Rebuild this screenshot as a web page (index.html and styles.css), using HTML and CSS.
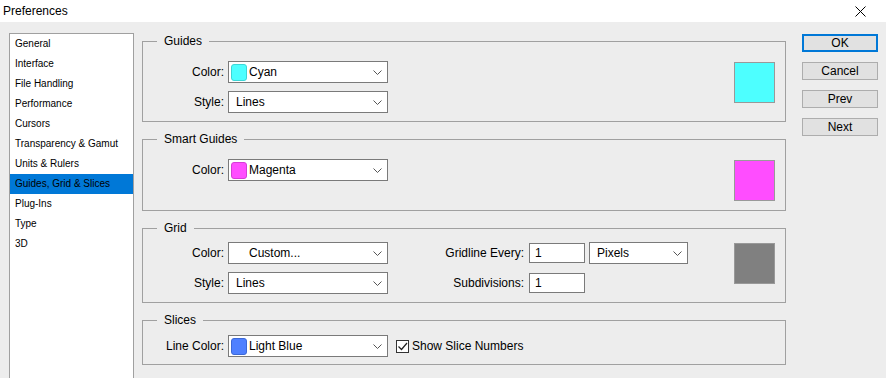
FILE: index.html
```html
<!DOCTYPE html>
<html lang="en">
<head>
  <meta charset="UTF-8">
  <title>Preferences</title>
  <link rel="stylesheet" href="styles.css">
</head>
<body>

  <div class="titlebar">
    <span class="title">Preferences</span>
    <svg class="close" width="11" height="11" viewBox="0 0 11 11">
      <path d="M0.5 0.5 L10.5 10.5 M10.5 0.5 L0.5 10.5" stroke="#000" stroke-width="1" fill="none"/>
    </svg>
  </div>

  <div class="main">
    <ul class="nav">
      <li>General</li>
      <li>Interface</li>
      <li>File Handling</li>
      <li>Performance</li>
      <li>Cursors</li>
      <li>Transparency &amp; Gamut</li>
      <li>Units &amp; Rulers</li>
      <li class="active">Guides, Grid &amp; Slices</li>
      <li>Plug-Ins</li>
      <li>Type</li>
      <li>3D</li>
    </ul>

    <div class="panels">
      <!-- Guides -->
      <fieldset class="group guides">
        <legend>Guides</legend>
        <div class="group-body">
          <div class="fields">
            <div class="row">
              <label class="lbl">Color:</label>
              <div class="select">
                <span class="chip cyan"></span><span class="val">Cyan</span>
                <svg class="chev" width="9" height="5" viewBox="0 0 9 5"><path d="M0.5 0.5 L4.5 4.5 L8.5 0.5" stroke="#555" fill="none"/></svg>
              </div>
            </div>
            <div class="row">
              <label class="lbl">Style:</label>
              <div class="select">
                <span class="val plain">Lines</span>
                <svg class="chev" width="9" height="5" viewBox="0 0 9 5"><path d="M0.5 0.5 L4.5 4.5 L8.5 0.5" stroke="#555" fill="none"/></svg>
              </div>
            </div>
          </div>
          <div class="preview cyan-fill"></div>
        </div>
      </fieldset>

      <!-- Smart Guides -->
      <fieldset class="group smart">
        <legend>Smart Guides</legend>
        <div class="group-body">
          <div class="fields">
            <div class="row">
              <label class="lbl">Color:</label>
              <div class="select">
                <span class="chip magenta"></span><span class="val">Magenta</span>
                <svg class="chev" width="9" height="5" viewBox="0 0 9 5"><path d="M0.5 0.5 L4.5 4.5 L8.5 0.5" stroke="#555" fill="none"/></svg>
              </div>
            </div>
          </div>
          <div class="preview magenta-fill"></div>
        </div>
      </fieldset>

      <!-- Grid -->
      <fieldset class="group grid">
        <legend>Grid</legend>
        <div class="group-body">
          <div class="fields">
            <div class="row">
              <label class="lbl">Color:</label>
              <div class="select">
                <span class="val indent">Custom...</span>
                <svg class="chev" width="9" height="5" viewBox="0 0 9 5"><path d="M0.5 0.5 L4.5 4.5 L8.5 0.5" stroke="#555" fill="none"/></svg>
              </div>
              <label class="lbl wide">Gridline Every:</label>
              <div class="input">1</div>
              <div class="select small">
                <span class="val plain">Pixels</span>
                <svg class="chev" width="9" height="5" viewBox="0 0 9 5"><path d="M0.5 0.5 L4.5 4.5 L8.5 0.5" stroke="#555" fill="none"/></svg>
              </div>
            </div>
            <div class="row">
              <label class="lbl">Style:</label>
              <div class="select">
                <span class="val plain">Lines</span>
                <svg class="chev" width="9" height="5" viewBox="0 0 9 5"><path d="M0.5 0.5 L4.5 4.5 L8.5 0.5" stroke="#555" fill="none"/></svg>
              </div>
              <label class="lbl wide">Subdivisions:</label>
              <div class="input">1</div>
            </div>
          </div>
          <div class="preview grey-fill"></div>
        </div>
      </fieldset>

      <!-- Slices -->
      <fieldset class="group slices">
        <legend>Slices</legend>
        <div class="group-body">
          <div class="fields">
            <div class="row">
              <label class="lbl">Line Color:</label>
              <div class="select">
                <span class="chip blue"></span><span class="val">Light Blue</span>
                <svg class="chev" width="9" height="5" viewBox="0 0 9 5"><path d="M0.5 0.5 L4.5 4.5 L8.5 0.5" stroke="#555" fill="none"/></svg>
              </div>
              <span class="check">
                <svg width="11" height="11" viewBox="0 0 11 11"><path d="M1.5 5.5 L4.5 8.5 L10 2" stroke="#222" stroke-width="1.2" fill="none"/></svg>
              </span>
              <span class="check-text">Show Slice Numbers</span>
            </div>
          </div>
        </div>
      </fieldset>
    </div>

    <div class="buttons">
      <button class="btn default">OK</button>
      <button class="btn">Cancel</button>
      <button class="btn">Prev</button>
      <button class="btn">Next</button>
    </div>
  </div>

</body>
</html>
```

FILE: styles.css
```css
:root {
  --bg: #ededed;
  --border: #a0a0a0;
  --field-border: #7a7a7a;
  --accent: #0078d7;
}

* {
  box-sizing: border-box;
}

body {
  margin: 0;
  width: 886px;
  height: 378px;
  overflow: hidden;
  background: var(--bg);
  font-family: "Liberation Sans", Arial, sans-serif;
  font-size: 12px;
  color: #000;
}

.titlebar {
  height: 22px;
  background: #fff;
  display: flex;
  align-items: center;
  justify-content: space-between;
  padding: 0 20px 0 3px;
}

.title {
  font-size: 12px;
}

.main {
  display: flex;
  padding: 11px 0 0 9px;
}

/* left category list */
.nav {
  list-style: none;
  margin: 0;
  padding: 0;
  width: 125px;
  height: 360px;
  background: #fff;
  border: 1px solid var(--border);
  font-size: 10px;
}

.nav li {
  height: 20px;
  line-height: 20px;
  padding-left: 5px;
  white-space: nowrap;
}

.nav li.active {
  background: var(--accent);
  color: #000;
}

/* group boxes */
.panels {
  width: 644px;
  margin-left: 8px;
}

.group {
  margin: 0 0 9px;
  border: 1px solid var(--border);
  padding: 0 0 8px 0;
  min-width: 0;
}

.group legend {
  margin-left: 14px;
  padding: 0 7px;
  line-height: 16px;
  font-size: 12px;
}

.guides { padding-top: 12px; }
.smart { padding-top: 12px; padding-bottom: 9px; }
.grid { padding-top: 6px; }
.slices { padding-top: 7px; padding-bottom: 7px; }

.group-body {
  display: flex;
  align-items: flex-start;
}

.fields {
  display: flex;
  flex-direction: column;
  gap: 8px;
}

.row {
  display: flex;
  align-items: center;
  height: 22px;
}

.lbl {
  width: 81px;
  text-align: right;
  margin-right: 4px;
  white-space: nowrap;
}

.lbl.wide {
  width: 136px;
  margin-right: 5px;
}

.select {
  position: relative;
  width: 160px;
  height: 22px;
  background: #fff;
  border: 1px solid var(--field-border);
  display: flex;
  align-items: center;
  padding-left: 2px;
}

.select.small {
  width: 99px;
  margin-left: 4px;
}

.chip {
  width: 16px;
  height: 17px;
  border-radius: 3px;
  margin-right: 2px;
}

.chip.cyan { background: #4dffff; border: 1px solid #3cd6d6; }
.chip.magenta { background: #ff4dff; border: 1px solid #d63cd6; }
.chip.blue { background: #4f80ff; border: 1px solid #3c68d6; }

.val.plain { padding-left: 5px; }
.val.indent { padding-left: 18px; }

.chev {
  position: absolute;
  right: 5px;
  top: 8px;
}

.input {
  width: 56px;
  height: 20px;
  background: #fff;
  border: 1px solid var(--field-border);
  padding-left: 5px;
  line-height: 18px;
}

.preview {
  width: 41px;
  height: 41px;
  margin: 1px 10px 0 auto;
  border: 1px solid #999;
}

.cyan-fill { background: #4dffff; }
.magenta-fill { background: #ff4dff; }
.grey-fill { background: #808080; }

.check {
  width: 13px;
  height: 13px;
  margin-left: 8px;
  margin-right: 3px;
  background: #fff;
  border: 1px solid #333;
  display: flex;
  align-items: center;
  justify-content: center;
}

/* dialog buttons */
.buttons {
  display: flex;
  flex-direction: column;
  gap: 10px;
  margin-left: 16px;
  padding-top: 1px;
}

.btn {
  width: 76px;
  height: 18px;
  padding: 0;
  background: #e1e1e1;
  border: 1px solid #adadad;
  font-family: "Liberation Sans", Arial, sans-serif;
  font-size: 12px;
  color: #000;
}

.btn.default {
  border: 2px solid var(--accent);
}
```
